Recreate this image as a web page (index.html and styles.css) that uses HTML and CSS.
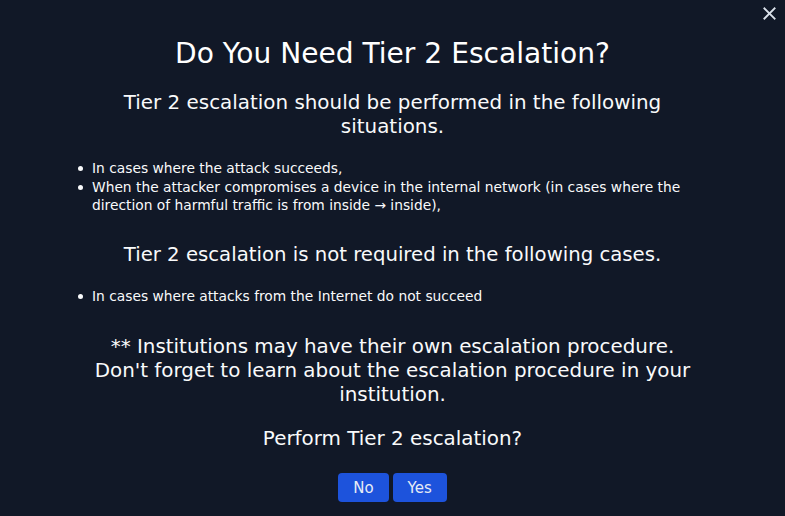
FILE: index.html
```html
<!DOCTYPE html>
<html lang="en">
<head>
<meta charset="utf-8">
<title>Tier 2 Escalation</title>
<link rel="stylesheet" href="styles.css">
</head>
<body>
<div class="modal">
  <button class="close" aria-label="Close">
    <svg viewBox="0 0 14 14" width="14" height="14"><path d="M1.5 1.5L12.5 12.5M12.5 1.5L1.5 12.5" stroke="currentColor" stroke-width="2" stroke-linecap="square" fill="none"/></svg>
  </button>
  <div class="content">
    <h1 class="title">Do You Need Tier 2 Escalation?</h1>
    <p class="lead">Tier 2 escalation should be performed in the following situations.</p>
    <ul class="list">
      <li>In cases where the attack succeeds,</li>
      <li>When the attacker compromises a device in the internal network (in cases where the direction of harmful traffic is from inside&nbsp;→&nbsp;inside),</li>
    </ul>
    <p class="lead lead-2">Tier 2 escalation is not required in the following cases.</p>
    <ul class="list list-last">
      <li>In cases where attacks from the Internet do not succeed</li>
    </ul>
    <p class="lead note">** Institutions may have their own escalation procedure.<br>Don't forget to learn about the escalation procedure in your institution.</p>
    <p class="lead question">Perform Tier 2 escalation?</p>
    <div class="actions">
      <button class="btn">No</button>
      <button class="btn">Yes</button>
    </div>
  </div>
</div>
</body>
</html>
```
FILE: styles.css
```css
html, body {
  margin: 0;
  padding: 0;
  background: #111827;
}
body {
  font-family: "DejaVu Sans", "Noto Sans", sans-serif;
  color: #f9fafb;
  width: 785px;
  height: 516px;
  overflow: hidden;
}
.modal {
  position: relative;
  height: 516px;
}
.close {
  position: absolute;
  top: 5px;
  right: 8px;
  width: 16px;
  height: 16px;
  padding: 1px;
  border: 0;
  background: none;
  color: #dbe1ea;
  display: flex;
  align-items: center;
  justify-content: center;
}
.close svg { width: 13px; height: 13px; }
.content {
  padding: 36px 52px 0;
  text-align: center;
}
.title {
  margin: 0 0 19px;
  font-size: 28.1px;
  font-weight: 400;
  line-height: 36px;
  color: #ffffff;
}
.lead {
  margin: 0 30px 20px;
  font-size: 19.9px;
  line-height: 24px;
}
.lead-2 { font-size: 19.7px; }
.list {
  margin: 0 0 28px;
  padding: 0 0 0 40px;
  list-style: none;
  text-align: left;
  font-size: 13.8px;
  line-height: 18.5px;
}
.list li {
  position: relative;
}
.list li::before {
  content: "";
  position: absolute;
  left: -14px;
  top: 7px;
  width: 5px;
  height: 5px;
  border-radius: 50%;
  background: #f9fafb;
}
.list-last { margin-bottom: 30px; }
.note { margin-bottom: 20px; }
.question { margin-bottom: 22px; }
.actions {
  display: flex;
  justify-content: center;
  gap: 4px;
}
.btn {
  height: 29px;
  padding: 0 15px;
  border: 0;
  border-radius: 4px;
  background: #1d53dc;
  color: #e8ecf5;
  font-family: "DejaVu Sans", "Noto Sans", sans-serif;
  font-size: 15px;
}
```
